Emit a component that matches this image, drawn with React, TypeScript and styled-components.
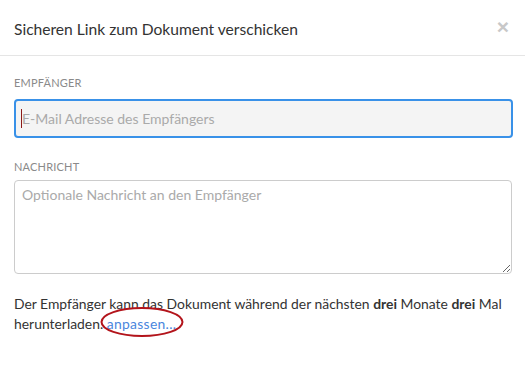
import React from "react";
import styled, { createGlobalStyle } from "styled-components";

const GlobalStyle = createGlobalStyle`
  html, body {
    margin: 0;
    padding: 0;
    background: #fff;
  }
  body {
    font-family: Lato, "Open Sans", sans-serif;
    color: #333;
  }
`;

const Modal = styled.div`
  width: 525px;
  height: 370px;
  background: #fff;
`;

const Header = styled.div`
  display: flex;
  align-items: center;
  justify-content: space-between;
  height: 56px;
  padding: 0 14px;
  border-bottom: 1px solid #e5e5e5;
  box-sizing: border-box;
`;

const Title = styled.h4`
  margin: 0;
  font-size: 15.6px;
  font-weight: 400;
  color: #333;
  padding-top: 2px;
`;

const Close = styled.button`
  border: 0;
  background: none;
  padding: 0 0 3px;
  margin-right: 2px;
  color: #c8c8c8;
  font-size: 21px;
  font-weight: 700;
  line-height: 1;
  font-family: "Liberation Sans", sans-serif;
`;

const Body = styled.div`
  padding: 20px 14px 0;
`;

const Label = styled.label<{ $gap?: number }>`
  display: block;
  font-size: 11px;
  letter-spacing: 0.2px;
  color: #8a8a8a;
  text-transform: uppercase;
  margin-bottom: ${(p) => p.$gap ?? 10}px;
`;

const Field = styled.div<{ $mb?: number }>`
  margin-bottom: ${(p) => p.$mb ?? 22}px;
`;

const InputWrap = styled.div`
  position: relative;
`;

const Input = styled.input`
  display: block;
  width: 499px;
  height: 39px;
  box-sizing: border-box;
  border: 2px solid #3991e8;
  border-radius: 4px;
  background: #f4f4f4;
  padding: 0 6px;
  font-family: inherit;
  font-size: 14px;
  outline: none;
  caret-color: transparent;
  &::placeholder {
    color: #aaa;
  }
`;

const Caret = styled.span`
  position: absolute;
  left: 7px;
  top: 10px;
  width: 1px;
  height: 19px;
  background: #8b1a1a;
  pointer-events: none;
`;

const Textarea = styled.textarea`
  display: block;
  width: 498px;
  height: 94px;
  box-sizing: border-box;
  border: 1px solid #ccc;
  border-radius: 4px;
  background: #fff;
  padding: 5px 7px;
  font-family: inherit;
  font-size: 14px;
  resize: vertical;
  &::placeholder {
    color: #aaa;
  }
`;

const Note = styled.p`
  margin: 0;
  font-size: 13.9px;
  line-height: 20px;
  color: #333;
`;

const Bold = styled.b`
  font-weight: 700;
`;

const LinkWrap = styled.span`
  position: relative;
`;

const Link = styled.a`
  color: #4a86dd;
  text-decoration: none;
  letter-spacing: 0.3px;
`;

const Circle = styled.svg`
  position: absolute;
  left: -7px;
  top: -9px;
  pointer-events: none;
`;

export default function App() {
  return (
    <>
      <GlobalStyle />
      <Modal>
        <Header>
          <Title>Sicheren Link zum Dokument verschicken</Title>
          <Close aria-label="Schließen">×</Close>
        </Header>
        <Body>
          <Field>
            <Label>Empfänger</Label>
            <InputWrap>
              <Input placeholder="E-Mail Adresse des Empfängers" />
              <Caret />
            </InputWrap>
          </Field>
          <Field $mb={20}>
            <Label $gap={7}>Nachricht</Label>
            <Textarea placeholder="Optionale Nachricht an den Empfänger" />
          </Field>
          <Note>
            Der Empfänger kann das Dokument während der nächsten <Bold>drei</Bold> Monate{" "}
            <Bold>drei</Bold> Mal herunterladen.{" "}
            <LinkWrap>
              <Link href="#">anpassen...</Link>
              <Circle width="84" height="32" viewBox="0 0 84 32">
                <ellipse cx="42" cy="16" rx="40.5" ry="14" fill="none" stroke="#b3141b" strokeWidth="2" />
              </Circle>
            </LinkWrap>
          </Note>
        </Body>
      </Modal>
    </>
  );
}
